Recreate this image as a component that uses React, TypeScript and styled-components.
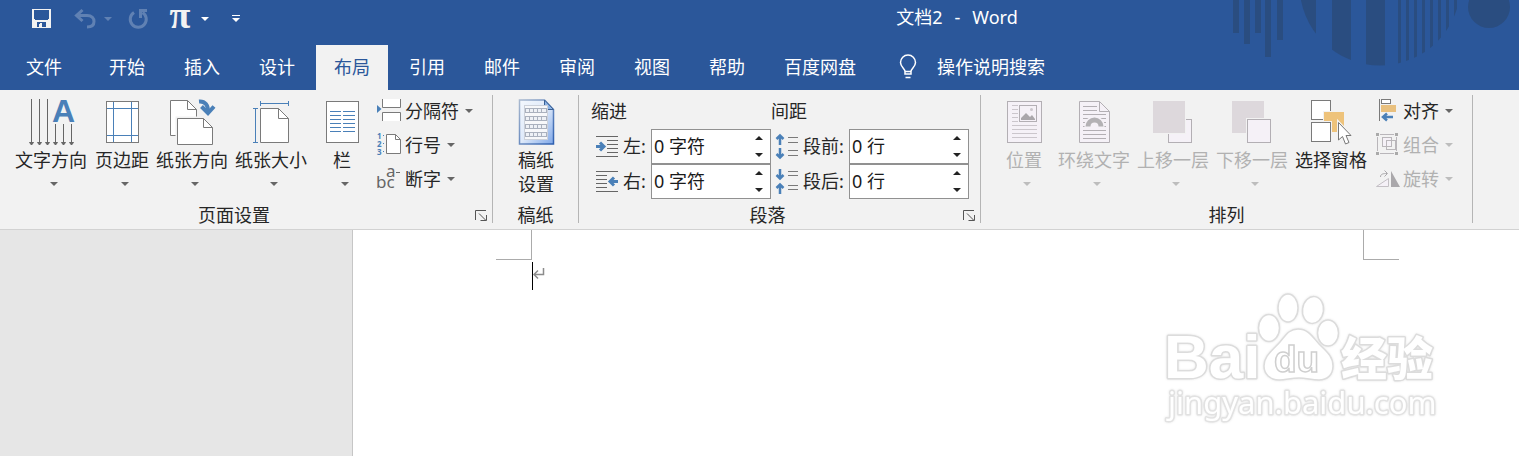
import React from "react";
import styled, { createGlobalStyle } from "styled-components";

const BLUE = "#2b579a";
const INK = "#262626";
const MUTED = "#b1b1b1";
const STROKE = "#7a7a7a";
const ACCENT = "#4a80b8";
const SOFT = "#f5f1f7";
const FACE = "#f2f2f2";

const GlobalStyle = createGlobalStyle`
  * { box-sizing: border-box; }
  body {
    margin: 0;
    font-family: "Noto Sans", "Noto Sans CJK SC", sans-serif;
    font-size: 18px;
    line-height: 24px;
    color: ${INK};
    background: #fff;
  }
  button, input {
    font: inherit;
    color: inherit;
    background: none;
    border: 0;
    padding: 0;
    margin: 0;
    white-space: nowrap;
  }
  svg { display: block; flex: none; overflow: visible; }
`;

const Window = styled.div`
  display: flex;
  flex-direction: column;
  min-height: 100vh;
  position: relative;
  overflow: hidden;
`;

const Header = styled.header`
  position: relative;
  background: ${BLUE};
  color: #fff;
`;

const Decoration = styled.svg`
  position: absolute;
  top: 0;
  right: 0;
`;

const TitleBar = styled.div`
  display: flex;
  height: 45px;
  align-items: flex-start;
`;

const QuickAccess = styled.div`
  flex: 0 0 59%;
  display: flex;
  align-items: center;
  height: 38px;
  padding-left: 31px;
`;

const QuickButton = styled.button<{ $w: number; $gap?: number; $dim?: boolean }>`
  display: flex;
  justify-content: center;
  width: ${(p) => p.$w}px;
  margin-right: ${(p) => p.$gap ?? 0}px;
  opacity: ${(p) => (p.$dim ? 0.25 : 1)};
`;

const Title = styled.h1`
  position: relative;
  display: flex;
  gap: 12px;
  margin: 0;
  padding-top: 5px;
  font-size: 18px;
  font-weight: 400;
`;

const TabBar = styled.nav`
  display: flex;
  gap: 3px;
  height: 45px;
`;

const Tab = styled.button<{ $active?: boolean; $file?: boolean }>`
  padding: 0 ${(p) => (p.$file ? 26 : 18)}px 2px;
  color: ${(p) => (p.$active ? BLUE : "#fff")};
  background: ${(p) => (p.$active ? FACE : "transparent")};
`;

const TellMe = styled.button`
  display: flex;
  align-items: center;
  gap: 20px;
  padding: 0 22px 2px;
`;

const Ribbon = styled.div`
  display: flex;
  height: 140px;
  padding: 5px 0 6px;
  background: ${FACE};
  border-bottom: 1px solid #d2d2d2;
`;

const Group = styled.section<{ $w: number }>`
  flex: 0 0 ${(p) => p.$w}px;
  display: flex;
  flex-direction: column;
  border-right: 1px solid #b5b5b5;
`;

const Tools = styled.div<{ $pad: number }>`
  flex: 1;
  display: flex;
  align-items: flex-start;
  padding: 4px 0 0 ${(p) => p.$pad}px;
`;

const GroupFooter = styled.div`
  display: flex;
  height: 16px;
  align-items: center;
`;

const GroupName = styled.span`
  flex: 1;
  text-align: center;
`;

const Launcher = styled.button`
  width: 24px;
  display: flex;
  padding-left: 7px;
`;

const BigButton = styled.button<{ $gap?: number }>`
  display: flex;
  flex-direction: column;
  align-items: center;
  margin-right: ${(p) => p.$gap ?? 7}px;
  line-height: 24px;
  &:disabled { color: ${MUTED}; }
`;

const BigLabel = styled.span`
  padding-top: 1px;
`;

const Arrow = styled.span<{ $big?: boolean }>`
  width: 8px;
  height: 4px;
  margin: ${(p) => (p.$big ? "10px 0 0 6px" : "0")};
  background: #666;
  clip-path: polygon(0 0, 100% 0, 50% 100%);
  button:disabled & { background: #bdbdbd; }
`;

const SmallColumn = styled.div<{ $ml: number }>`
  display: flex;
  flex-direction: column;
  gap: 10px;
  margin-left: ${(p) => p.$ml}px;
`;

const SmallButton = styled.button<{ $gap: number }>`
  display: flex;
  align-items: center;
  height: 24px;
  line-height: 24px;
  svg { margin-right: ${(p) => p.$gap}px; }
  ${Arrow} { margin-left: 6px; }
  &:disabled { color: ${MUTED}; }
`;

const FieldSet = styled.fieldset<{ $w: number }>`
  width: ${(p) => p.$w}px;
  margin: 0;
  padding: 0;
  border: 0;
  min-width: 0;
`;

const Legend = styled.legend`
  height: 30px;
  padding: 0;
`;

const FieldRow = styled.div`
  display: flex;
  align-items: center;
  justify-content: space-between;
  height: 35px;
  padding-left: 4px;
`;

const FieldLabel = styled.label<{ $w: number }>`
  width: ${(p) => p.$w}px;
  padding-bottom: 2px;
  white-space: nowrap;
`;

const SpinBox = styled.div`
  display: flex;
  width: 120px;
  height: 35px;
  border: 1px solid #919191;
  background: #fff;
  color: #1a1a1a;
`;

const SpinInput = styled.input`
  width: 95px;
  padding: 0 0 2px 2px;
  outline: 0;
`;

const Spinners = styled.div`
  flex: 1;
  display: flex;
  flex-direction: column;
  justify-content: center;
  gap: 2px;
`;

const SpinButton = styled.button`
  display: flex;
  align-items: center;
  justify-content: center;
  height: 15px;
`;

const Workspace = styled.main`
  flex: 1;
  display: flex;
  background: #e6e6e6;
  padding-left: 352px;
`;

const Page = styled.article`
  flex: 1;
  background: #fff;
  border-left: 1px solid #c6c6c6;
  padding: 0 120px 0 143px;
`;

const CropMarks = styled.div`
  display: flex;
  justify-content: space-between;
`;

const CropMark = styled.span<{ $side: "left" | "right" }>`
  width: 36px;
  height: 30px;
  border-bottom: 1px solid #ababab;
  ${(p) => (p.$side === "left" ? "border-right" : "border-left")}: 1px solid #ababab;
`;

const TextLine = styled.div`
  display: flex;
  align-items: center;
  height: 28px;
  margin: 2px 0 0 36px;
  padding-bottom: 4px;
  border-left: 1px solid #000;
`;

const Watermark = styled.svg`
  position: absolute;
  right: 69px;
  bottom: 26px;
  filter: drop-shadow(0 0 1px #e4e4e4);
`;

type IconProps = { size?: number; children: React.ReactNode };
const Icon = ({ size = 48, children }: IconProps) => (
  <svg width={size} height={size} viewBox={`0 0 ${size} ${size}`} fill="none" stroke={STROKE} aria-hidden="true">
    {children}
  </svg>
);

const TextDirectionIcon = () => (
  <Icon>
    {[4.5, 12.5, 20.5].map((x) => (
      <g key={x} stroke="#666">
        <path d={`M${x} 0V46`} />
        <path d={`M${x - 2} 43.5h4l-2 2.5z`} fill="#666" />
      </g>
    ))}
    {[28.5, 36.5, 44.5].map((x) => (
      <g key={x} stroke="#666">
        <path d={`M${x} 25V46`} />
        <path d={`M${x - 2} 43.5h4l-2 2.5z`} fill="#666" />
      </g>
    ))}
    <text x="25" y="23" fontFamily="Liberation Sans, sans-serif" fontWeight="700" fontSize="32" fill={ACCENT} stroke="none">A</text>
  </Icon>
);

const MarginsIcon = () => (
  <Icon>
    <rect x="8.5" y="2.5" width="32" height="41" fill="#fff" />
    <path d="M15.5 3V43M33.5 3V43M9 9.5H40M9 36.5H40" stroke={ACCENT} />
  </Icon>
);

const OrientationIcon = () => (
  <Icon>
    <path d="M2.5 1.5H19.5L28.5 10.5V36.5H2.5Z" fill="#fff" stroke="none" />
    <path d="M8 36.5H2.5V1.5H19.5L28.5 10.5V18M19.5 1.5V10.5H28.5" />
    <path d="M7.5 17.5H46V47H7.5Z" fill={FACE} stroke="none" />
    <path d="M9.5 19.5H35.5L44.5 28.5V45.5H9.5Z" fill="#fff" />
    <path d="M35.5 19.5V28.5H44.5" />
    <path d="M31 2.5C37 2 40.5 6 40 14" stroke={ACCENT} strokeWidth="4" />
    <path d="M33.5 7.5L40 14L46 7.5" stroke={ACCENT} strokeWidth="4" />
  </Icon>
);

const PaperSizeIcon = () => (
  <Icon>
    <path d="M13.5 9.5H31.5L41.5 19.5V43.5H13.5Z" fill="#fff" />
    <path d="M31.5 9.5V19.5H41.5" />
    <path d="M13.5 4.5H41.5M13.5 2V7M41.5 2V7M8.5 9.5V43.5M6 9.5H11M6 43.5H11" stroke={ACCENT} />
  </Icon>
);

const ColumnsIcon = () => (
  <Icon>
    <rect x="8.5" y="2.5" width="32" height="41" fill="#fff" />
    {[12.5, 16.5, 20.5, 24.5, 28.5, 32.5].map((y) => (
      <path key={y} d={`M12 ${y}H23M25 ${y}H37`} stroke={ACCENT} />
    ))}
  </Icon>
);

const BreaksIcon = () => (
  <Icon size={24}>
    <path d="M0 6V14L4.5 10Z" fill={ACCENT} stroke="none" />
    <path d="M5.5 0V8.5H23.5V0" fill="#fff" />
    <path d="M5.5 22V13.5H23.5V22" fill="#fff" />
  </Icon>
);

const LineNumbersIcon = () => (
  <Icon size={24}>
    <path d="M9.5 1.5H18.5L23.5 6.5V20.5H9.5Z" fill="#fff" />
    <path d="M18.5 1.5V6.5H23.5" />
    {["1", "2", "3"].map((n, i) => (
      <React.Fragment key={n}>
        <text x="0" y={6 + i * 8} fontFamily="Noto Sans, sans-serif" fontSize="8" fontWeight="700" fill={ACCENT} stroke="none">{n}</text>
        <rect x="6" y={2 + i * 8} width="1" height="1" fill={ACCENT} stroke="none" />
      </React.Fragment>
    ))}
  </Icon>
);

const HyphenIcon = () => (
  <Icon size={24}>
    <text x="-1" y="21" fontSize="17" fill="#666" stroke="none">bc</text>
    <text x="9" y="10" fontSize="17" fill="#666" stroke="none">a</text>
    <path d="M19 5.5H23" stroke="#666" />
  </Icon>
);

const ManuscriptIcon = () => (
  <Icon>
    <defs>
      <linearGradient id="sheet" x1="0" y1="0" x2="1" y2="1">
        <stop offset="0" stopColor="#f4f8fd" />
        <stop offset="0.5" stopColor="#dfeafa" />
        <stop offset="1" stopColor="#7da6e8" />
      </linearGradient>
      <linearGradient id="sheetEdge" x1="0" y1="0" x2="1" y2="1">
        <stop offset="0" stopColor="#a9b9cf" />
        <stop offset="1" stopColor="#2d5fb0" />
      </linearGradient>
    </defs>
    <path d="M7.5 1H32.5L41.5 10.5V45H7.5Z" fill="url(#sheet)" stroke="url(#sheetEdge)" strokeWidth="1.5" />
    <path d="M32.5 1V10.5H41.5Z" fill="#8db4e6" stroke="#3a6094" />
    <rect x="12.5" y="6.5" width="23" height="34" fill="#f7f8fa" stroke="#ccd1da" />
    {[9.5, 17.5, 25.5, 33.5].map((y) => (
      <g key={y} stroke="#aab1be">
        <rect x="13.5" y={y} width="21" height="4" fill="#eef1f6" />
        <path d={`M17.5 ${y}v4M21.5 ${y}v4M25.5 ${y}v4M29.5 ${y}v4`} />
      </g>
    ))}
  </Icon>
);

const IndentIcon = ({ right }: { right?: boolean }) => (
  <Icon size={24}>
    <path d="M1 1.5H23M1 21.5H23" stroke="#666" />
    {[5.5, 9.5, 13.5, 17.5].map((y) => (
      <path key={y} d={right ? `M1 ${y}H12` : `M12 ${y}H23`} stroke="#666" />
    ))}
    <path
      d={right ? "M23 11.5H15M19 7.5L15 11.5L19 15.5" : "M1 11.5H9M5 7.5L9 11.5L5 15.5"}
      stroke={ACCENT}
      strokeWidth="3"
    />
  </Icon>
);

const SpacingIcon = ({ after }: { after?: boolean }) => (
  <Icon size={24}>
    {(after ? [1.5, 5.5, 15.5, 19.5] : [2.5, 7.5, 15.5, 20.5]).map((y) => (
      <path key={y} d={`M13 ${y}H23`} />
    ))}
    <path
      d={
        after
          ? "M5 -1V8M1.5 5L5 8.500L8.500 5M5 24V15M1.500 18L5 14.500L8.500 18"
          : "M5 10V1M1.500 4L5 .5L8.500 4M5 13V22M1.500 19L5 22.500L8.500 19"
      }
      stroke={ACCENT}
      strokeWidth="2.5"
    />
  </Icon>
);

const PositionIcon = () => (
  <Icon>
    <g stroke="#b3afb4">
      <rect x="7.5" y="2.5" width="34" height="41" fill={SOFT} />
      <path d="M12 6.5H18M12 10.5H18M12 14.5H18M12 18.5H18M12 22.5H18M12 26.5H37M12 30.5H37M12 34.5H37M12 38.5H37" stroke="#cbc6cc" />
      <rect x="19.5" y="6.5" width="17" height="16" fill={SOFT} />
      <path d="M21 21V19L26 14L30 18L32 16L35 20V21Z" fill="#aaa7ab" stroke="none" />
      <circle cx="31.5" cy="10.5" r="1.5" fill="#cbc6cc" stroke="none" />
    </g>
  </Icon>
);

const WrapIcon = () => (
  <Icon>
    <g stroke="#b3afb4">
      <path d="M9.5 2.5H29.5L39.5 12.5V43.5H9.5Z" fill={SOFT} />
      <path d="M29.5 2.5V12.5H39.5" />
      <path d="M13 7.5H27M13 11.5H27M13 15.5H36M13 19.5H36M13 23.5H16M33 23.5H36M13 27.5H15M34 27.5H36M13 31.5H36M13 35.5H36M13 39.5H36" />
      <path d="M18 27.5A6.5 6.5 0 0 1 31 27.5" strokeWidth="8" stroke={SOFT} />
      <path d="M18 27.5A6.5 6.5 0 0 1 31 27.5" strokeWidth="5" stroke="#b3b1b4" />
    </g>
  </Icon>
);

const ForwardIcon = () => (
  <Icon>
    <rect x="19.5" y="20.5" width="23" height="23" fill={SOFT} stroke="#b3afb4" />
    <path d="M3 1H37V35H3Z" fill={FACE} stroke="none" />
    <path d="M4 2H36V34H4Z" fill="#ddd8dc" stroke="none" />
  </Icon>
);

const BackwardIcon = () => (
  <Icon>
    <path d="M4 2H36V34H4Z" fill="#ddd8dc" stroke="none" />
    <path d="M18 19H44V45H18Z" fill={FACE} stroke="none" />
    <rect x="19.5" y="20.5" width="23" height="23" fill={SOFT} stroke="#b3afb4" />
  </Icon>
);

const SelectionIcon = () => (
  <Icon>
    <rect x="4.5" y="1.5" width="19" height="19" fill="#fff" />
    <path d="M16 12H38V34H16Z" fill={FACE} stroke="none" />
    <path d="M17 13H37V33H17Z" fill="#eec37b" stroke="none" />
    <path d="M3 22H25V44H3Z" fill={FACE} stroke="none" />
    <rect x="4.5" y="23.5" width="19" height="19" fill="#fff" />
    <path d="M31.5 23.5V41L35.5 37.5L38.5 45L42 43.5L39 36.5H44Z" fill="#fff" stroke="#f2f2f2" strokeWidth="3" />
    <path d="M31.5 23.5V41L35.5 37.5L38.5 45L42 43.5L39 36.5H44Z" fill="#fff" stroke="#777" />
  </Icon>
);

const AlignIcon = () => (
  <Icon size={24}>
    <path d="M3.5 0V22" />
    <rect x="5.5" y="0.5" width="9" height="4" fill="#fff" />
    <path d="M5 6H20V13H5Z" fill="#e9c07e" stroke="none" />
    <path d="M17 18H7M11 14.5L7 18L11 21.5" stroke={ACCENT} strokeWidth="2.5" />
  </Icon>
);

const GroupIcon = () => (
  <Icon size={24}>
    <g stroke="#b9b6ba">
      <path d="M4 1.5H18M4 20.5H18M1.5 4V18M20.5 4V18" />
      <rect x="6.5" y="4.5" width="9" height="9" fill={SOFT} />
      <rect x="10.5" y="7.5" width="9" height="9" fill="none" />
      <path d="M0 0h3v3H0ZM19 0h3v3h-3ZM0 19h3v3H0ZM19 19h3v3h-3Z" fill="#aaa" stroke="none" />
    </g>
  </Icon>
);

const RotateIcon = () => (
  <Icon size={24}>
    <path d="M0.5 19.5L12.5 11.5V19.5Z" fill={SOFT} stroke="#c4c0c5" />
    <path d="M15 4V20H24Z" fill="#aaa8ab" stroke="none" />
    <path d="M4.5 10C4.5 7 7 6.5 11 6.5M8.5 3.5L11.5 6.5L8.5 9.5" stroke="#aaa8ab" />
  </Icon>
);

const SaveIcon = () => (
  <svg width="20" height="20" viewBox="0 0 20 20" aria-hidden="true">
    <path d="M1 0H20V19H1Z" fill="#f2f2f2" />
    <path d="M3 1H18V10H17V11H4V10H3ZM6 13H15V18H6Z" fill={BLUE} />
    <path d="M8 14H10V18H8ZM12 14H13V18H12Z" fill="#f2f2f2" />
    <path d="M6 14V18H8V15H10V18H14V14Z" fill={BLUE} />
    <path d="M9 14H11V18H9Z" fill="#f2f2f2" />
  </svg>
);

const UndoIcon = () => (
  <svg width="22" height="20" viewBox="0 0 22 20" fill="none" stroke="#fff" strokeWidth="3" aria-hidden="true">
    <path d="M2 6.5H13C18 6.5 20 9.5 20 12.5C20 16 17.5 18 13 18" />
    <path d="M8.5 1L2.5 6.5L8.5 12" />
  </svg>
);

const RedoIcon = () => (
  <svg width="20" height="20" viewBox="0 0 20 20" fill="none" stroke="#fff" strokeWidth="3" aria-hidden="true">
    <path d="M6 3.5A8 8 0 1 0 14.5 3.5" />
    <path d="M19 1.5H12.5V9" />
  </svg>
);

const Caret = () => (
  <svg width="8" height="4" viewBox="0 0 8 4" aria-hidden="true">
    <path d="M0 0H8L4 4Z" fill="#fff" />
  </svg>
);

const CustomizeIcon = () => (
  <svg width="8" height="8" viewBox="0 0 8 8" aria-hidden="true">
    <path d="M0 0H8V1H0ZM0 3H8L4 7Z" fill="#fff" />
  </svg>
);

const Pi = styled.span`
  font-family: "Liberation Serif", serif;
  font-weight: 700;
  font-size: 38px;
  line-height: 24px;
  padding-bottom: 8px;
  color: #f2f2f2;
`;

const BulbIcon = () => (
  <svg width="18" height="26" viewBox="0 0 18 26" fill="none" stroke="#fff" strokeWidth="1.5" aria-hidden="true">
    <path d="M6 20V17.5C6 14.5 1.5 13 1.5 8.5A7.5 7.5 0 0 1 16.5 8.5C16.5 13 12 14.5 12 17.5V20Z" />
    <path d="M6 17.5H12M6.5 23.5H11.5" />
  </svg>
);

const LauncherIcon = () => (
  <svg width="13" height="11" viewBox="0 0 13 11" fill="none" stroke="#555" aria-hidden="true">
    <path d="M0.5 10V0.5H11M4 3.5L10.5 10M11.5 5V10.5H5.5" />
  </svg>
);

const TriangleIcon = ({ down }: { down?: boolean }) => (
  <svg width="8" height="4" viewBox="0 0 8 4" aria-hidden="true">
    <path d={down ? "M0 0H8L4 4Z" : "M0 4H8L4 0Z"} fill="#222" />
  </svg>
);

const Spin = ({ id, value }: { id: string; value: string }) => (
  <SpinBox>
    <SpinInput id={id} type="text" defaultValue={value} />
    <Spinners>
      <SpinButton type="button" aria-label="增加"><TriangleIcon /></SpinButton>
      <SpinButton type="button" aria-label="减少"><TriangleIcon down /></SpinButton>
    </Spinners>
  </SpinBox>
);

type BigProps = { icon: React.ReactNode; label: string; gap?: number; disabled?: boolean; menu?: boolean };
const Big = ({ icon, label, gap, disabled, menu = true }: BigProps) => (
  <BigButton type="button" $gap={gap} disabled={disabled}>
    {icon}
    <BigLabel>{label}</BigLabel>
    {menu && <Arrow $big />}
  </BigButton>
);

type SmallProps = { icon: React.ReactNode; label: string; gap?: number; disabled?: boolean };
const Small = ({ icon, label, gap = 4, disabled }: SmallProps) => (
  <SmallButton type="button" $gap={gap} disabled={disabled}>
    {icon}
    {label}
    <Arrow />
  </SmallButton>
);

const Footer = ({ name, launcher }: { name: string; launcher?: boolean }) => (
  <GroupFooter>
    <GroupName>{name}</GroupName>
    {launcher && <Launcher type="button" aria-label={name}><LauncherIcon /></Launcher>}
  </GroupFooter>
);

const HeaderPattern = () => (
  <Decoration width="300" height="70" viewBox="1219 0 300 70" fill="#2a4d80" aria-hidden="true">
    <path d="M1233 0h6v33h-6ZM1244 0h6v44h-6ZM1255 0h6v33h-6ZM1265 0h6v57h-6ZM1277 0h6v40h-6Z" />
    <clipPath id="stripes">
      <path d="M1300 0h16v70h-16ZM1332 0h19v70h-19ZM1366 0h19v70h-19ZM1398 0h3v70h-3ZM1406 0h3v70h-3ZM1414 0h3v70h-3ZM1422 0h3v70h-3ZM1430 0h3v70h-3ZM1438 0h3v70h-3ZM1446 0h3v70h-3ZM1454 0h3v70h-3Z" />
    </clipPath>
    <circle cx="1380" cy="-15" r="80.5" clipPath="url(#stripes)" />
    <circle cx="1489" cy="7" r="21" />
  </Decoration>
);

const BaiduMark = () => (
  <Watermark width="290" height="140" viewBox="0 0 290 140" aria-label="Baidu 经验">
    <g fill="#fff" stroke="#dcdcdc" strokeWidth="3" paintOrder="stroke" strokeLinejoin="round">
      <text x="4" y="88" fontFamily="Liberation Sans, sans-serif" fontWeight="700" fontSize="62">Bai</text>
      <text x="181" y="85" fontFamily="Noto Sans CJK SC, sans-serif" fontWeight="900" fontSize="46">经验</text>
      <text x="8" y="124" fontFamily="Noto Sans, sans-serif" fontSize="31" stroke="#e2e2e2">jingyan.baidu.com</text>
    </g>
    <g fill="#fff" stroke="#dcdcdc" strokeWidth="1.5">
      <ellipse cx="109" cy="38" rx="10.5" ry="13.5" />
      <ellipse cx="128" cy="18" rx="10" ry="14" />
      <ellipse cx="153" cy="20" rx="10.5" ry="13.5" transform="rotate(8 153 20)" />
      <ellipse cx="168" cy="43" rx="10.5" ry="13" />
      <path d="M138 39C148 39 152 46 159 54C166 61 173 66 173 76C173 85 167 90 159 90C151 90 147 88 139 88C131 88 126 90 119 90C110 90 104 84 104 76C104 66 112 61 120 52C126 45 129 39 138 39Z" />
      <text x="114" y="82" fontFamily="Liberation Sans, sans-serif" fontWeight="700" fontSize="37" stroke="#cfcfcf">du</text>
    </g>
  </Watermark>
);

const tabs = ["开始", "插入", "设计", "布局", "引用", "邮件", "审阅", "视图", "帮助", "百度网盘"];

export default function App() {
  return (
    <Window>
      <GlobalStyle />
      <Header>
        <HeaderPattern />
        <TitleBar>
          <QuickAccess>
            <QuickButton type="button" $w={20} $gap={23} aria-label="保存"><SaveIcon /></QuickButton>
            <QuickButton type="button" $w={22} $gap={8} $dim aria-label="撤消"><UndoIcon /></QuickButton>
            <QuickButton type="button" $w={8} $gap={16} $dim aria-label="撤消列表"><Caret /></QuickButton>
            <QuickButton type="button" $w={20} $gap={22} $dim aria-label="恢复"><RedoIcon /></QuickButton>
            <QuickButton type="button" $w={20} $gap={11} aria-label="公式"><Pi>π</Pi></QuickButton>
            <QuickButton type="button" $w={8} $gap={23} aria-label="公式列表"><Caret /></QuickButton>
            <QuickButton type="button" $w={8} aria-label="自定义"><CustomizeIcon /></QuickButton>
          </QuickAccess>
          <Title><span>文档2</span><span>-</span><span>Word</span></Title>
        </TitleBar>
        <TabBar>
          <Tab type="button" $file>文件</Tab>
          {tabs.map((t) => (
            <Tab key={t} type="button" $active={t === "布局"}>{t}</Tab>
          ))}
          <TellMe type="button"><BulbIcon />操作说明搜索</TellMe>
        </TabBar>
      </Header>

      <Ribbon>
        <Group $w={493}>
          <Tools $pad={15}>
            <Big icon={<TextDirectionIcon />} label="文字方向" gap={8} />
            <Big icon={<MarginsIcon />} label="页边距" />
            <Big icon={<OrientationIcon />} label="纸张方向" />
            <Big icon={<PaperSizeIcon />} label="纸张大小" gap={11} />
            <Big icon={<ColumnsIcon />} label="栏" gap={0} />
            <SmallColumn $ml={11}>
              <Small icon={<BreaksIcon />} label="分隔符" />
              <Small icon={<LineNumbersIcon />} label="行号" />
              <Small icon={<HyphenIcon />} label="断字" />
            </SmallColumn>
          </Tools>
          <Footer name="页面设置" launcher />
        </Group>

        <Group $w={86}>
          <Tools $pad={19}>
            <BigButton type="button">
              <ManuscriptIcon />
              <BigLabel>稿纸<br />设置</BigLabel>
            </BigButton>
          </Tools>
          <Footer name="稿纸" />
        </Group>

        <Group $w={402}>
          <Tools $pad={12}>
            <FieldSet $w={180}>
              <Legend>缩进</Legend>
              <FieldRow>
                <IndentIcon />
                <FieldLabel $w={24} htmlFor="indent-left">左:</FieldLabel>
                <Spin id="indent-left" value="0 字符" />
              </FieldRow>
              <FieldRow>
                <IndentIcon right />
                <FieldLabel $w={24} htmlFor="indent-right">右:</FieldLabel>
                <Spin id="indent-right" value="0 字符" />
              </FieldRow>
            </FieldSet>
            <FieldSet $w={198}>
              <Legend>间距</Legend>
              <FieldRow>
                <SpacingIcon />
                <FieldLabel $w={42} htmlFor="space-before">段前:</FieldLabel>
                <Spin id="space-before" value="0 行" />
              </FieldRow>
              <FieldRow>
                <SpacingIcon after />
                <FieldLabel $w={42} htmlFor="space-after">段后:</FieldLabel>
                <Spin id="space-after" value="0 行" />
              </FieldRow>
            </FieldSet>
          </Tools>
          <Footer name="段落" launcher />
        </Group>

        <Group $w={492}>
          <Tools $pad={19}>
            <Big icon={<PositionIcon />} label="位置" gap={10} disabled />
            <Big icon={<WrapIcon />} label="环绕文字" disabled />
            <Big icon={<ForwardIcon />} label="上移一层" disabled />
            <Big icon={<BackwardIcon />} label="下移一层" disabled />
            <Big icon={<SelectionIcon />} label="选择窗格" menu={false} />
            <SmallColumn $ml={2}>
              <Small icon={<AlignIcon />} label="对齐" gap={3} />
              <Small icon={<GroupIcon />} label="组合" gap={3} disabled />
              <Small icon={<RotateIcon />} label="旋转" gap={3} disabled />
            </SmallColumn>
          </Tools>
          <Footer name="排列" />
        </Group>
      </Ribbon>

      <Workspace>
        <Page>
          <CropMarks>
            <CropMark $side="left" />
            <CropMark $side="right" />
          </CropMarks>
          <TextLine>
            <svg width="12" height="12" viewBox="0 0 12 12" fill="none" stroke="#8c8c8c" aria-hidden="true">
              <path d="M10.5 0V6.5H1M5 2.5L1 6.5L5 10.5" strokeWidth="1.5" />
            </svg>
          </TextLine>
        </Page>
      </Workspace>
      <BaiduMark />
    </Window>
  );
}
